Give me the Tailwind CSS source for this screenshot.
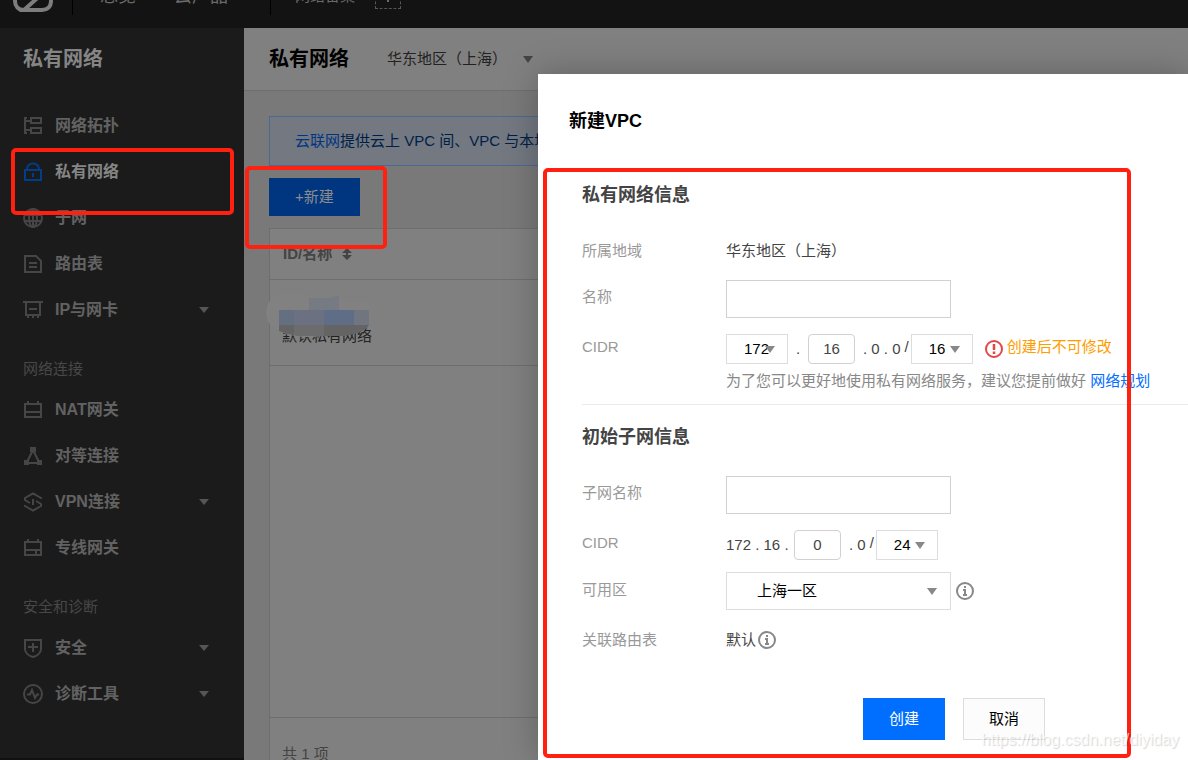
<!DOCTYPE html>
<html lang="zh-CN">
<head>
<meta charset="utf-8">
<meta name="viewport" content="width=device-width, initial-scale=1">
<title>私有网络 - 新建VPC</title>
<script src="https://cdn.jsdelivr.net/npm/@tailwindcss/browser@4"></script>
</head>
<body class="relative flex h-screen flex-col overflow-hidden bg-[#797979] font-['Liberation_Sans','Noto_Sans_CJK_SC',sans-serif] text-[15px] leading-5 text-[#222]">

<!-- Top navigation, scrolled partly out of view -->
<header class="relative z-20 h-7 shrink-0 overflow-hidden bg-[#131313]">
  <nav class="-mt-7 flex h-12 items-center pl-[13px] text-[#6a6a6a]">
    <a href="#" aria-label="首页" class="text-[#7d7d7d]">
      <svg class="h-8 w-10" viewBox="0 0 40 32" fill="none" stroke="currentColor" stroke-width="4"><path d="M11 30C5 30 2 26 2 21s4-8 9-8c1-6 5-11 11-11s10 4 11 9c4 2 5 6 5 10 0 6-4 9-9 9H11L30 13"/></svg>
    </a>
    <span class="ml-[19px] h-[38px] w-px bg-black"></span>
    <a href="#" class="ml-[27px] text-[18px]">总览</a>
    <a href="#" class="ml-[38px] text-[18px]">云产品</a>
    <span class="ml-[42px] h-[38px] w-px bg-black"></span>
    <a href="#" class="ml-6">网络备案</a>
    <button type="button" aria-label="添加" class="ml-5 flex size-[26px] items-center justify-center border border-dashed border-[#555]">
      <svg class="size-3" viewBox="0 0 12 12" stroke="currentColor" stroke-width="2"><path d="M6 0v12M0 6h12"/></svg>
    </button>
  </nav>
</header>

<div class="flex min-h-0 flex-1">
  <!-- Side menu -->
  <aside class="flex w-[244px] shrink-0 flex-col bg-[#1b1b1b] text-base font-bold text-[#626262]">
    <h2 class="flex h-[62px] items-center pl-[23px] text-xl text-[#858585]">私有网络</h2>
    <ul class="mt-[13px]">
      <li><a href="#" class="flex h-[46px] items-center gap-3 pr-[35px] pl-[23px]">
        <svg class="size-5 text-[#464646]" viewBox="0 0 20 20" fill="none" stroke="currentColor" stroke-width="2"><path d="M2 1v17M1 2h3M1 17h3M2 5h6M2 14h6M8 2h10v5H8zM8 12h10v5H8z"/></svg>
        <span>网络拓扑</span></a></li>
      <li><a href="#" class="flex h-[46px] items-center gap-3 pr-[35px] pl-[23px] text-[#858585]">
        <svg class="size-5 text-[#003d8a]" viewBox="0 0 20 20" fill="none" stroke="currentColor" stroke-width="2"><path d="M2 8h16v10H2zM4 8V7a6 5.500 0 0 1 12 0v1M10 11v4"/></svg>
        <span>私有网络</span></a></li>
      <li><a href="#" class="flex h-[46px] items-center gap-3 pr-[35px] pl-[23px]">
        <svg class="size-5 text-[#464646]" viewBox="0 0 20 20" fill="none" stroke="currentColor" stroke-width="2"><circle cx="10" cy="10" r="9"/><ellipse cx="10" cy="10" rx="4" ry="9"/><path d="M10 1v18M2 7h16M2 13h16"/></svg>
        <span>子网</span></a></li>
      <li><a href="#" class="flex h-[46px] items-center gap-3 pr-[35px] pl-[23px]">
        <svg class="size-5 text-[#464646]" viewBox="0 0 20 20" fill="none" stroke="currentColor" stroke-width="2"><path d="M2 2h11l5 5v11H2zM6 9h8M6 13h8"/></svg>
        <span>路由表</span></a></li>
      <li><a href="#" class="flex h-[46px] items-center gap-3 pr-[35px] pl-[23px]">
        <svg class="size-5 text-[#464646]" viewBox="0 0 20 20" fill="none" stroke="currentColor" stroke-width="2"><path d="M0 2h20M3 2v13h14V2M6 9h8M5 15v3M10 15v3M15 15v3"/></svg>
        <span class="flex-1">IP与网卡</span>
        <svg class="h-[6px] w-[10px] text-[#555]" viewBox="0 0 10 6" fill="currentColor"><path d="M0 0h10L5 6z"/></svg></a></li>
    </ul>
    <h3 class="mt-[18px] flex h-9 items-center pl-[23px] text-[15px] font-normal text-[#484848]">网络连接</h3>
    <ul>
      <li><a href="#" class="flex h-[46px] items-center gap-3 pr-[35px] pl-[23px]">
        <svg class="size-5 text-[#464646]" viewBox="0 0 20 20" fill="none" stroke="currentColor" stroke-width="2"><path d="M2 4h16v13H2zM5 1v4M15 1v4M2 12h16"/></svg>
        <span>NAT网关</span></a></li>
      <li><a href="#" class="flex h-[46px] items-center gap-3 pr-[35px] pl-[23px]">
        <svg class="size-5 text-[#464646]" viewBox="0 0 20 20" fill="none" stroke="currentColor" stroke-width="2"><path d="M10 4L4 16M10 4l6 12M4 17h12"/><path fill="currentColor" stroke="none" d="M7 1h6v5H7zM1 14h5v5H1zM14 14h5v5h-5z"/></svg>
        <span>对等连接</span></a></li>
      <li><a href="#" class="flex h-[46px] items-center gap-3 pr-[35px] pl-[23px]">
        <svg class="size-5 text-[#464646]" viewBox="0 0 20 20" fill="none" stroke="currentColor" stroke-width="2"><path d="M18 7v-1L10 1.500 2 6v2l5 3M2 13v1l8 4.500 8-4.500v-2l-5-3M10 7v6"/></svg>
        <span class="flex-1">VPN连接</span>
        <svg class="h-[6px] w-[10px] text-[#555]" viewBox="0 0 10 6" fill="currentColor"><path d="M0 0h10L5 6z"/></svg></a></li>
      <li><a href="#" class="flex h-[46px] items-center gap-3 pr-[35px] pl-[23px]">
        <svg class="size-5 text-[#464646]" viewBox="0 0 20 20" fill="none" stroke="currentColor" stroke-width="2"><path d="M2 4h16v13H2zM5 1v4M15 1v4M2 12h16M13 12v5"/></svg>
        <span>专线网关</span></a></li>
    </ul>
    <h3 class="mt-[18px] flex h-9 items-center pl-[23px] text-[15px] font-normal text-[#484848]">安全和诊断</h3>
    <ul>
      <li><a href="#" class="flex h-[46px] items-center gap-3 pr-[35px] pl-[23px]">
        <svg class="size-5 text-[#464646]" viewBox="0 0 20 20" fill="none" stroke="currentColor" stroke-width="2"><path d="M2 2h16v9c0 4-4 7-8 8-4-1-8-4-8-8zM10 5v9M5 9h10"/></svg>
        <span class="flex-1">安全</span>
        <svg class="h-[6px] w-[10px] text-[#555]" viewBox="0 0 10 6" fill="currentColor"><path d="M0 0h10L5 6z"/></svg></a></li>
      <li><a href="#" class="flex h-[46px] items-center gap-3 pr-[35px] pl-[23px]">
        <svg class="size-5 text-[#464646]" viewBox="0 0 20 20" fill="none" stroke="currentColor" stroke-width="2"><circle cx="10" cy="10" r="9"/><path d="M4 10.500h3L9 6l3 8 2-3.500h2"/></svg>
        <span class="flex-1">诊断工具</span>
        <svg class="h-[6px] w-[10px] text-[#555]" viewBox="0 0 10 6" fill="currentColor"><path d="M0 0h10L5 6z"/></svg></a></li>
    </ul>
    <div class="mt-auto h-0.5 bg-[#111]"></div>
  </aside>

  <!-- VPC list behind the dialog -->
  <main class="flex min-w-0 flex-1 flex-col overflow-hidden">
    <div class="flex h-[63px] shrink-0 items-center border-b border-[#6e6e6e] bg-[#808080] pl-[25px]">
      <h1 class="text-xl font-bold text-black">私有网络</h1>
      <button type="button" class="ml-[38px] flex items-center gap-4">华东地区（上海）
        <svg class="h-[7px] w-[10px] text-[#444]" viewBox="0 0 10 7" fill="currentColor"><path d="M0 0h10L5 7z"/></svg></button>
    </div>
    <div class="flex min-h-0 flex-1 flex-col gap-3 px-[25px] pt-[25px]">
      <p class="flex h-[50px] shrink-0 items-center overflow-hidden border border-[#4a6a94] bg-[#737881] pl-[25px] whitespace-nowrap text-[#001f47]"><a href="#" class="text-[#003580]">云联网</a>提供云上 VPC 间、VPC 与本地</p>
      <button type="button" class="h-[38px] w-[91px] shrink-0 bg-[#003580] text-[#8c8c8c]">+新建</button>
      <section class="-mb-[30px] flex flex-1 flex-col border border-[#6e6e6e] bg-[#808080]">
        <table class="w-full text-left">
          <thead><tr class="h-[50px] border-b border-[#6e6e6e]"><th class="pl-[13px] text-[#444]"><span class="flex items-center gap-2.5">ID/名称
            <svg class="h-3 w-[10px]" viewBox="0 0 10 12" fill="currentColor"><path d="M5 0l5 5H6v2h4l-5 5-5-5h4V5H0z"/></svg></span></th></tr></thead>
          <tbody><tr class="h-[86px] border-b border-[#6e6e6e]"><td class="pt-7 pl-3"><span class="relative block w-[90px]">默认私有网络
            <!-- Mosaic hiding the VPC id -->
            <svg class="absolute -top-9 -left-[17px] h-12 w-[106px]" viewBox="0 0 106 48"><path fill="#818181" d="M13 4C-3 12-3 35 15 42c14 5 27 6 43 4h17c13-1 24-5 29-12V12H85L40 4z"/><path fill="#767a83" d="M44 8h20l10-3v15H44z"/><path fill="#646f82" d="M14 20h15v15H14z"/><path fill="#6b7180" d="M29 20h30v15H29z"/><path fill="#5f6d86" d="M59 20h30v15H59z"/><path fill="#70757f" d="M89 20h15v15H89z"/><path fill="#646464" d="M14 35h90c-4 7-14 9-25 11H35c-9-1-16-3-21-5z"/><path fill="#6c6c6c" d="M29 35h30v11H35l-6-1z"/></svg></span></td></tr></tbody>
        </table>
        <footer class="mt-auto flex h-[72px] items-center border-t border-[#6e6e6e] pl-3 text-[#444]">共 1 项</footer>
      </section>
    </div>
  </main>
</div>

<!-- New VPC dialog -->
<div role="dialog" aria-labelledby="dialog-title" class="absolute top-[74px] right-0 bottom-0 left-[538px] z-10 bg-white text-[#444] shadow-[0_0_32px_rgba(0,0,0,0.25)]">
  <h2 id="dialog-title" class="flex h-[94px] items-center pl-[31px] text-[18px] font-bold text-black">新建VPC</h2>
  <form class="pl-11">
    <section class="flex flex-col gap-3 border-b border-[#eaeaea] pt-[10px] pb-3">
      <h3 class="mb-[10px] h-[34px] text-[18px] leading-[34px] font-bold">私有网络信息</h3>
      <div class="flex h-[34px] items-center">
        <span class="w-36 text-[#999]">所属地域</span><span>华东地区（上海）</span>
      </div>
      <div class="flex items-start">
        <label for="vpc-name" class="w-36 leading-[34px] text-[#999]">名称</label>
        <input id="vpc-name" type="text" class="h-[38px] w-[225px] border border-[#d1d1d1] px-3">
      </div>
      <div class="flex items-start">
        <label for="vpc-a" class="w-36 shrink-0 leading-[34px] text-[#999]">CIDR</label>
        <div class="pt-1">
          <div class="flex h-[30px] items-center whitespace-nowrap">
            <span class="relative"><select id="vpc-a" class="block h-[30px] w-[62px] appearance-none border border-[#ddd] pl-[17px] text-black"><option>172</option></select>
              <svg class="pointer-events-none absolute top-3 left-[39px] h-[7px] w-[10px] text-[#888]" viewBox="0 0 10 7" fill="currentColor"><path d="M0 0h10L5 7z"/></svg></span>
            <span class="w-5 text-center">.</span>
            <input type="text" aria-label="CIDR 第二段" value="16" class="h-[30px] w-[47px] rounded-sm border border-[#d1d1d1] pb-0.5 text-center">
            <span class="ml-2">. 0 . 0</span><span class="mr-0.5 ml-1 pb-1">/</span>
            <span class="relative"><select aria-label="掩码" class="block h-[30px] w-[62px] appearance-none border border-[#ddd] pl-[17px] text-black"><option>16</option></select>
              <svg class="pointer-events-none absolute top-3 left-[39px] h-[7px] w-[10px] text-[#888]" viewBox="0 0 10 7" fill="currentColor"><path d="M0 0h10L5 7z"/></svg></span>
            <svg class="ml-3 size-[18px] text-[#e54545]" viewBox="0 0 18 18" fill="none" stroke="currentColor" stroke-width="2"><circle cx="9" cy="9" r="8"/><path stroke-width="2.500" d="M9 4v6M9 11.500v2.500"/></svg>
            <span class="ml-1 pb-1 text-[#ff9d00]">创建后不可修改</span>
          </div>
          <p class="mt-1.5 h-[22px] leading-[22px] whitespace-nowrap text-[#888]">为了您可以更好地使用私有网络服务，建议您提前做好 <a href="#" class="text-[#006eff]">网络规划</a></p>
        </div>
      </div>
    </section>

    <section class="flex flex-col gap-3 pt-[15px]">
      <h3 class="mb-[10px] h-[34px] text-[18px] leading-[34px] font-bold">初始子网信息</h3>
      <div class="flex items-start">
        <label for="subnet-name" class="w-36 leading-[34px] text-[#999]">子网名称</label>
        <input id="subnet-name" type="text" class="h-[38px] w-[225px] border border-[#d1d1d1] px-3">
      </div>
      <div class="flex items-start">
        <label for="subnet-c" class="w-36 leading-[34px] text-[#999]">CIDR</label>
        <div class="flex h-[34px] items-center pt-1">
          <span class="w-[68px]">172 . 16 .</span>
          <input id="subnet-c" type="text" value="0" class="h-[30px] w-[47px] rounded-sm border border-[#d1d1d1] pb-0.5 text-center">
          <span class="ml-2">. 0</span><span class="mr-0.5 ml-1 pb-1">/</span>
          <span class="relative"><select aria-label="子网掩码" class="block h-[30px] w-[62px] appearance-none border border-[#ddd] pl-[17px] text-black"><option>24</option></select>
            <svg class="pointer-events-none absolute top-3 left-[39px] h-[7px] w-[10px] text-[#888]" viewBox="0 0 10 7" fill="currentColor"><path d="M0 0h10L5 7z"/></svg></span>
        </div>
      </div>
      <div class="flex items-start">
        <label for="zone" class="w-36 leading-9 text-[#999]">可用区</label>
        <span class="relative"><select id="zone" class="block h-[38px] w-[225px] appearance-none border border-[#ddd] pl-[30px] text-black"><option>上海一区</option></select>
          <svg class="pointer-events-none absolute top-4 right-[14px] h-[7px] w-[10px] text-[#888]" viewBox="0 0 10 7" fill="currentColor"><path d="M0 0h10L5 7z"/></svg></span>
        <svg class="ml-[5px] h-[38px] w-[18px] text-[#888]" viewBox="0 0 18 18" fill="none" stroke="currentColor" stroke-width="2"><circle cx="9" cy="9" r="8"/><path d="M9 4v2M7 8h2v5M7 13h4"/></svg>
      </div>
      <div class="flex h-9 items-center">
        <span class="w-36 text-[#999]">关联路由表</span><span>默认</span>
        <svg class="ml-0.5 size-[18px] text-[#888]" viewBox="0 0 18 18" fill="none" stroke="currentColor" stroke-width="2"><circle cx="9" cy="9" r="8"/><path d="M9 4v2M7 8h2v5M7 13h4"/></svg>
      </div>
    </section>

    <div class="mt-10 flex justify-end gap-[18px] pr-[143px]">
      <button type="submit" class="h-[42px] w-[82px] bg-[#006eff] text-white">创建</button>
      <button type="button" class="h-[42px] w-[82px] border border-[#ddd] bg-[#fcfcfc] text-black">取消</button>
    </div>
  </form>
</div>

<!-- Red highlight frames -->
<div class="pointer-events-none absolute top-[148px] left-[11px] z-30 h-[67px] w-[223px] rounded-[5px] border-4 border-[#ff2010]"></div>
<div class="pointer-events-none absolute top-[166px] left-[245px] z-30 h-[83px] w-[142px] rounded-[5px] border-4 border-[#ff2010]"></div>
<div class="pointer-events-none absolute top-[168px] left-[543px] z-30 h-[590px] w-[588px] rounded-[5px] border-4 border-[#ff2010]"></div>
<span class="pointer-events-none absolute right-[9px] bottom-2 z-30 text-base text-white/70 [text-shadow:1px_1px_1px_rgba(0,0,0,0.16)]">https://blog.csdn.net/diyiday</span>
</body>
</html>
